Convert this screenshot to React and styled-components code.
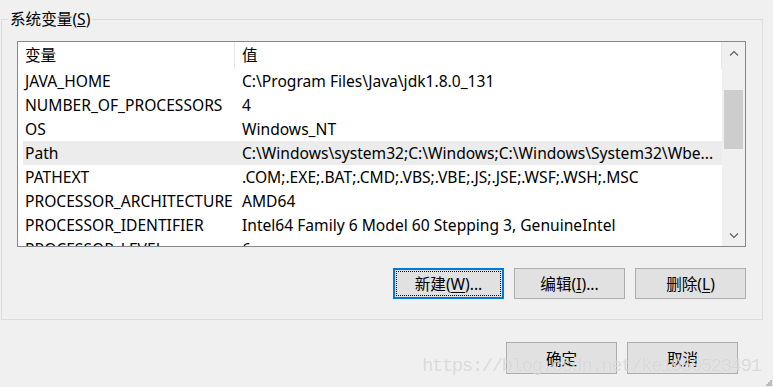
import styled, { createGlobalStyle } from 'styled-components';

const GlobalStyle = createGlobalStyle`
  html, body {
    margin: 0;
    padding: 0;
    background: #f0f0f0;
  }
  body {
    font-family: "Noto Sans", "Noto Sans CJK SC", sans-serif;
    font-size: 15.6px;
    color: #000;
  }
`;

const variables = [
  ['JAVA_HOME', 'C:\\Program Files\\Java\\jdk1.8.0_131'],
  ['NUMBER_OF_PROCESSORS', '4'],
  ['OS', 'Windows_NT'],
  ['Path', 'C:\\Windows\\system32;C:\\Windows;C:\\Windows\\System32\\Wbe...'],
  ['PATHEXT', '.COM;.EXE;.BAT;.CMD;.VBS;.VBE;.JS;.JSE;.WSF;.WSH;.MSC'],
  ['PROCESSOR_ARCHITECTURE', 'AMD64'],
  ['PROCESSOR_IDENTIFIER', 'Intel64 Family 6 Model 60 Stepping 3, GenuineIntel'],
  ['PROCESSOR_LEVEL', '6'],
];

const Chevron = ({ down }) => (
  <svg width="10" height="7" viewBox="0 0 10 7">
    <polyline
      points={down ? '1,1.5 5,5.5 9,1.5' : '1,5.5 5,1.5 9,5.5'}
      fill="none"
      stroke="#606060"
      strokeWidth="1.2"
    />
  </svg>
);

const App = () => (
  <Page>
    <GlobalStyle />
    <Group>
      <Legend>系统变量(<u>S</u>)</Legend>
      <ListBox>
        <Table>
          <Header>
            <HeadCell $width={212}>变量</HeadCell>
            <HeadCell $width={487} $value>值</HeadCell>
          </Header>
          {variables.map(([name, value]) => (
            <Row key={name} $selected={name === 'Path'}>
              <Cell $width={212}>{name}</Cell>
              <Cell $width={487} $value>{value}</Cell>
            </Row>
          ))}
        </Table>
        <ScrollBar>
          <Arrow><Chevron /></Arrow>
          <Thumb $top={25} $height={59} />
          <Arrow $down><Chevron down /></Arrow>
        </ScrollBar>
      </ListBox>
      <ButtonRow>
        <Button $focused>新建(<u>W</u>)...</Button>
        <Button>编辑(<u>I</u>)...</Button>
        <Button>删除(<u>L</u>)</Button>
      </ButtonRow>
    </Group>
    <Footer>
      <Button $tall>确定</Button>
      <Button $tall>取消</Button>
    </Footer>
    <Watermark>https://blog.csdn.net/ke1950523491</Watermark>
    <Grip>
      <svg width="6" height="6" viewBox="0 0 6 6">
        <rect x="4" y="0" width="2" height="2" fill="#bcbcbc" />
        <rect x="2" y="2" width="2" height="2" fill="#bcbcbc" />
        <rect x="4" y="2" width="2" height="2" fill="#bcbcbc" />
        <rect x="0" y="4" width="2" height="2" fill="#bcbcbc" />
        <rect x="2" y="4" width="2" height="2" fill="#bcbcbc" />
        <rect x="4" y="4" width="2" height="2" fill="#bcbcbc" />
      </svg>
    </Grip>
  </Page>
);

export default App;

const Page = styled.div`
  position: relative;
  box-sizing: border-box;
  width: 773px;
  height: 387px;
  padding: 0 10px 0 1px;
  overflow: hidden;
  background: #f0f0f0;
`;

const Group = styled.div`
  margin-top: 19px;
  border: 1px solid #dcdcdc;
  padding: 0 16px 20px 15px;
`;

const Legend = styled.div`
  width: fit-content;
  margin: -11px 0 0 -9px;
  padding: 0 2px;
  line-height: 20px;
  background: #f0f0f0;
`;

const ListBox = styled.div`
  display: flex;
  margin-top: 12px;
  height: 204px;
  border: 1px solid #828790;
  background: #fff;
  overflow: hidden;
`;

const Table = styled.div`
  flex: 1;
  padding-left: 5px;
  overflow: hidden;
`;

const Header = styled.div`
  display: flex;
  height: 27px;
  align-items: stretch;
`;

const HeadCell = styled.div`
  box-sizing: border-box;
  width: ${(p) => p.$width}px;
  padding-left: ${(p) => (p.$value ? 7 : 2)}px;
  line-height: 27px;
  border-right: 1px solid #e5e5e5;
`;

const Row = styled.div`
  display: flex;
  height: 24px;
  line-height: 24px;
  background: ${(p) => (p.$selected ? '#ececec' : 'transparent')};
`;

const Cell = styled.div`
  box-sizing: border-box;
  width: ${(p) => p.$width}px;
  padding-left: ${(p) => (p.$value ? 7 : 2)}px;
  white-space: nowrap;
  overflow: hidden;
`;

const ScrollBar = styled.div`
  display: flex;
  flex-direction: column;
  width: 23px;
  background: #f0f0f0;
`;

const Arrow = styled.div`
  display: flex;
  align-items: center;
  justify-content: center;
  height: ${(p) => (p.$down ? 21 : 23)}px;
  margin-top: ${(p) => (p.$down ? 'auto' : '0')};
`;

const Thumb = styled.div`
  margin: ${(p) => p.$top}px 2px 0 2px;
  height: ${(p) => p.$height}px;
  background: #cdcdcd;
`;

const ButtonRow = styled.div`
  display: flex;
  justify-content: flex-end;
  gap: 10px;
  margin-top: 21px;
`;

const Footer = styled.div`
  display: flex;
  justify-content: flex-end;
  gap: 10px;
  margin-top: 22px;
  padding-right: 25px;
`;

const Button = styled.button`
  position: relative;
  box-sizing: border-box;
  width: 111px;
  height: ${(p) => (p.$tall ? 32 : 31)}px;
  padding: 0;
  font: inherit;
  color: #000;
  background: #e1e1e1;
  border: ${(p) => (p.$focused ? '2px solid #0078d7' : '1px solid #adadad')};

  u {
    text-underline-offset: 2px;
  }

  ${(p) => p.$focused && `
    &::after {
      content: '';
      position: absolute;
      inset: 1px;
      border: 1px dotted #000;
    }
  `}
`;

const Watermark = styled.div`
  position: absolute;
  left: 422px;
  top: 355px;
  font-family: "Liberation Mono", monospace;
  font-size: 19px;
  line-height: 22px;
  letter-spacing: -1.45px;
  color: rgba(195, 195, 195, 0.6);
  text-shadow: 0 0 1px rgba(255, 255, 255, 0.8);
  white-space: nowrap;
  pointer-events: none;
`;

const Grip = styled.div`
  position: absolute;
  right: 1px;
  bottom: 1px;
  line-height: 0;
`;
